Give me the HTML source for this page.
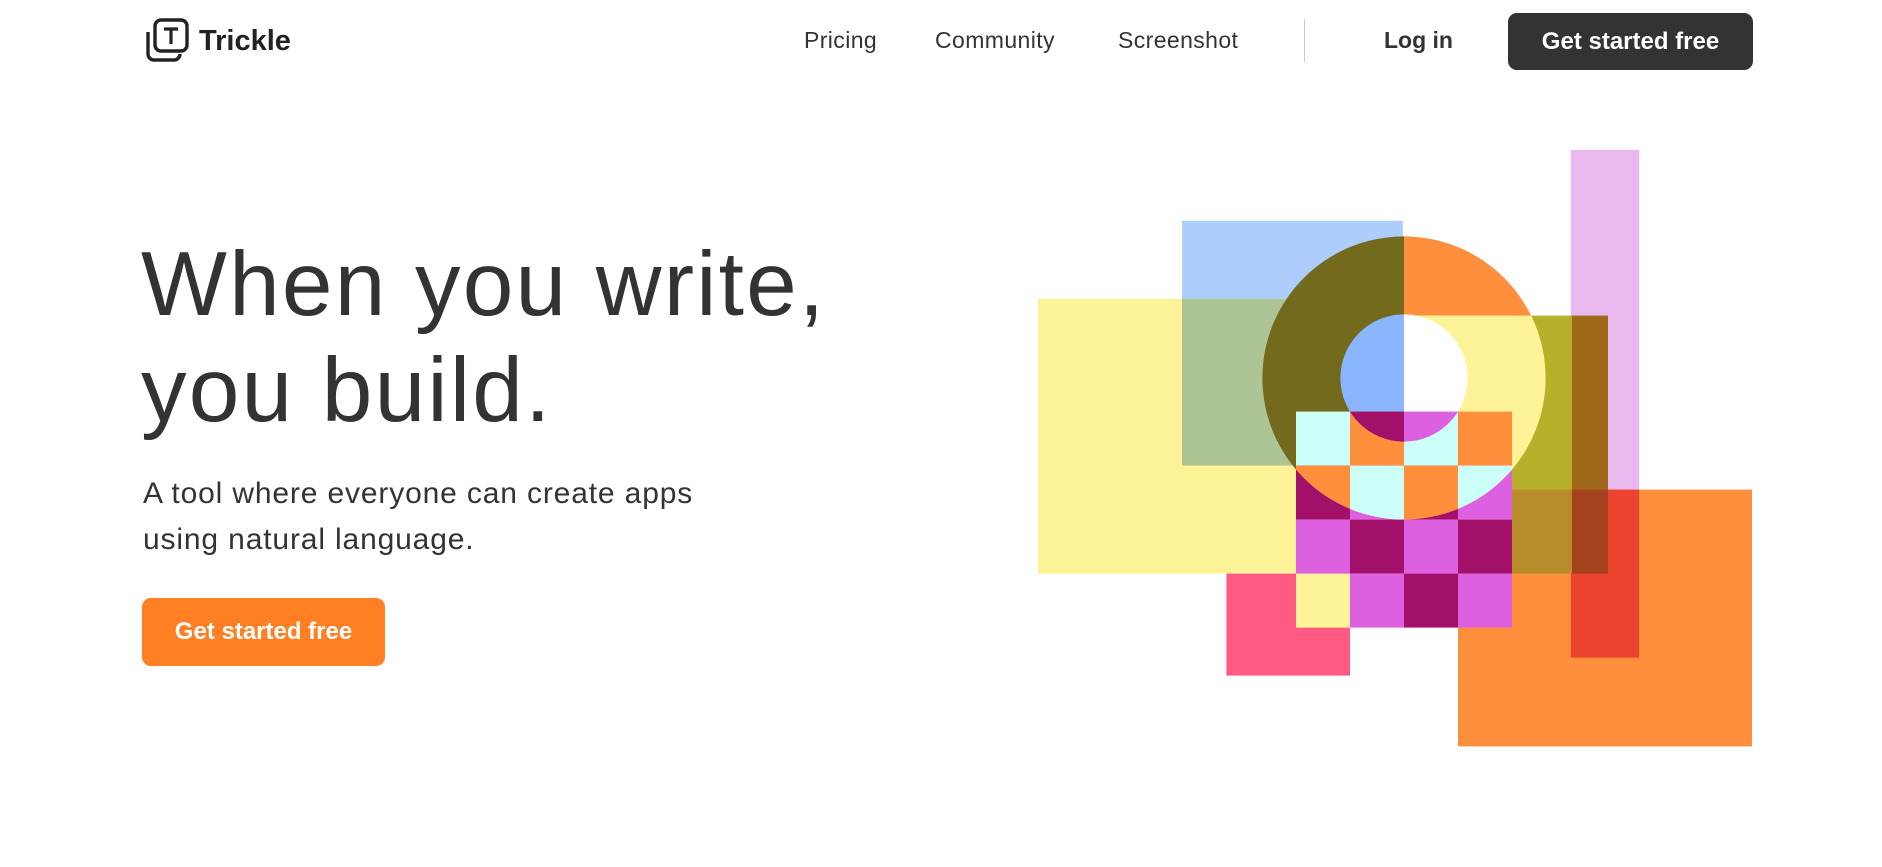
<!DOCTYPE html>
<html><head><meta charset="utf-8"><style>
*{margin:0;padding:0;box-sizing:border-box}
html,body{width:1882px;height:867px;overflow:hidden;background:#fff;font-family:"Liberation Sans",Arial,sans-serif;color:#333}
.a{position:absolute;white-space:nowrap}
.nav{font-size:23px;color:#333;top:27px;letter-spacing:0.4px}
</style></head><body>
<svg class="a" style="left:144px;top:18px" width="46" height="46" viewBox="0 0 46 46" fill="none" stroke="#222" stroke-width="3.4">
<rect x="11" y="2" width="32" height="31" rx="6"/>
<path d="M4 14 v22 a6 6 0 0 0 6 6 h20 a6 6 0 0 0 6-6"/>
<path d="M20 11 h14 M27 11 v15" stroke-width="3.2"/>
</svg>
<div class="a" style="left:199px;top:25px;font-size:29px;font-weight:bold;color:#222">Trickle</div>
<div class="a nav" style="left:804px">Pricing</div>
<div class="a nav" style="left:935px">Community</div>
<div class="a nav" style="left:1118px">Screenshot</div>
<div class="a" style="left:1304px;top:19px;width:1px;height:43px;background:#ccc"></div>
<div class="a nav" style="left:1384px;font-weight:bold;letter-spacing:0">Log in</div>
<div class="a" style="left:1508px;top:13px;width:245px;height:57px;background:#333;border-radius:9px;color:#fff;font-weight:bold;font-size:24px;text-align:center;line-height:57px">Get started free</div>
<div class="a" style="left:141px;top:232px;font-size:91px;line-height:106px;color:#333;letter-spacing:2.2px">When you write,<br>you build.</div>
<div class="a" style="left:143px;top:471px;font-size:30px;line-height:46px;color:#333;letter-spacing:0.85px">A tool where everyone can create apps<br>using natural language.</div>
<div class="a" style="left:142px;top:598px;width:243px;height:68px;background:#FF7F22;border-radius:9px;color:#fff;font-weight:bold;font-size:24px;text-align:center;line-height:68px">Get started free</div>
<svg class="a" style="left:0;top:0" width="1882" height="867" viewBox="0 0 1568.33 722.5">
<defs>
<clipPath id="outer"><circle cx="1170" cy="315" r="118"/></clipPath>
<clipPath id="inner"><circle cx="1170" cy="315" r="53"/></clipPath>
</defs>
<rect x="1309" y="125" width="57" height="283" fill="#E9B8EE"/>
<rect x="985" y="184" width="184" height="204" fill="#ADCDFE"/>
<rect x="865" y="249" width="215" height="229" fill="#FFF297"/>
<rect x="985" y="249" width="184" height="139" fill="#ADC495"/>
<rect x="1215" y="408" width="245" height="214" fill="#FF8E3D"/>
<rect x="1309" y="408" width="57" height="140" fill="#EB452F"/>
<rect x="1080" y="263" width="180" height="215" fill="#FFF297"/>
<rect x="1260" y="263" width="50" height="145" fill="#B7B02A"/>
<rect x="1310" y="263" width="30" height="145" fill="#A0691A"/>
<rect x="1260" y="408" width="50" height="70" fill="#B88C2A"/>
<rect x="1310" y="408" width="30" height="70" fill="#A3421C"/>
<rect x="1022" y="478" width="103" height="85" fill="#FF5A84"/>
<g clip-path="url(#outer)">
<rect x="1040" y="190" width="130" height="260" fill="#746A1E"/>
<rect x="1170" y="190" width="130" height="73" fill="#FF8E3D"/>
<rect x="1170" y="263" width="130" height="190" fill="#FFF297"/>
</g>
<g clip-path="url(#inner)">
<rect x="1110" y="255" width="60" height="120" fill="#8AB6FF"/>
<rect x="1170" y="255" width="60" height="120" fill="#fff"/>
</g>
<g>
<rect x="1080" y="343" width="45" height="45" fill="#CBFFF8"/>
<rect x="1125" y="343" width="45" height="45" fill="#FF8E3D"/>
<rect x="1170" y="343" width="45" height="45" fill="#CBFFF8"/>
<rect x="1215" y="343" width="45" height="45" fill="#FF8E3D"/>
<rect x="1080" y="388" width="45" height="45" fill="#A21069"/>
<rect x="1125" y="388" width="45" height="45" fill="#DD60E0"/>
<rect x="1170" y="388" width="45" height="45" fill="#A21069"/>
<rect x="1215" y="388" width="45" height="45" fill="#DD60E0"/>
<rect x="1080" y="433" width="45" height="45" fill="#DD60E0"/>
<rect x="1125" y="433" width="45" height="45" fill="#A21069"/>
<rect x="1170" y="433" width="45" height="45" fill="#DD60E0"/>
<rect x="1215" y="433" width="45" height="45" fill="#A21069"/>
<rect x="1080" y="478" width="45" height="45" fill="#FFF297"/>
<rect x="1125" y="478" width="45" height="45" fill="#DD60E0"/>
<rect x="1170" y="478" width="45" height="45" fill="#A21069"/>
<rect x="1215" y="478" width="45" height="45" fill="#DD60E0"/>
</g>
<g clip-path="url(#outer)">
<rect x="1080" y="388" width="45" height="45" fill="#FF8E3D"/>
<rect x="1125" y="388" width="45" height="45" fill="#CBFFF8"/>
<rect x="1170" y="388" width="45" height="45" fill="#FF8E3D"/>
<rect x="1215" y="388" width="45" height="45" fill="#CBFFF8"/>
</g>
<g clip-path="url(#inner)">
<rect x="1125" y="343" width="45" height="45" fill="#A21069"/>
<rect x="1170" y="343" width="45" height="45" fill="#DD60E0"/>
</g>
</svg>
</body></html>
